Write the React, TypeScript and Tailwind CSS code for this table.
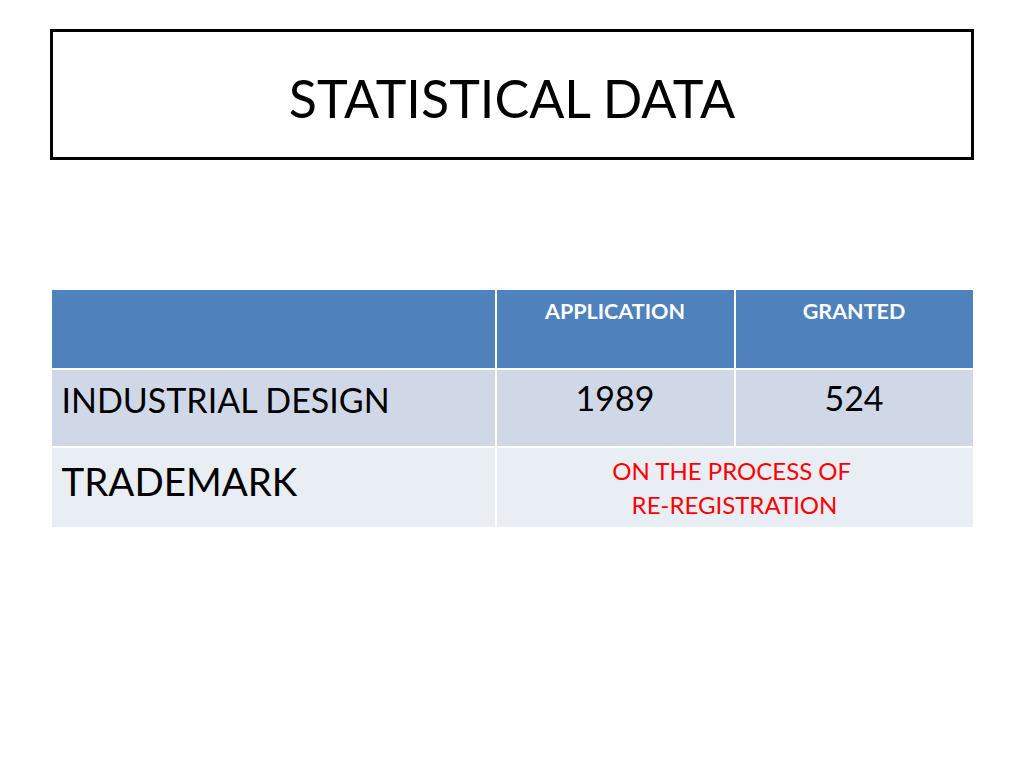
export default function App() {
  return (
    <div
      className="w-[1024px] h-[768px] bg-white flex flex-col items-center"
      style={{ fontFamily: "Lato, 'Open Sans', sans-serif" }}
    >
      <div className="mt-[29px] w-[924px] h-[131px] border-[3px] border-black flex items-center justify-center pt-[6px]">
        <h1 className="text-[52px] leading-none text-black">STATISTICAL DATA</h1>
      </div>

      <div className="mt-[130px] w-[921px] grid grid-cols-[443px_237px_237px] gap-[2px] bg-white">
        <div className="bg-[#4f81bd] h-[78px]" />
        <div className="bg-[#4f81bd] h-[78px] pt-[5px] text-center text-white font-bold text-[21.5px]">APPLICATION</div>
        <div className="bg-[#4f81bd] h-[78px] pt-[5px] text-center text-white font-bold text-[21.5px]">GRANTED</div>

        <div className="bg-[#d0d8e8] h-[76px] pl-[10px] pt-[4px] text-[34px] text-black">INDUSTRIAL DESIGN</div>
        <div className="bg-[#d0d8e8] h-[76px] pt-[2px] text-center text-[34px] text-black">1989</div>
        <div className="bg-[#d0d8e8] h-[76px] pt-[2px] text-center text-[34px] text-black">524</div>

        <div className="bg-[#e9edf4] h-[79px] pl-[10px] pt-[9px] text-[38.5px] leading-tight text-black">TRADEMARK</div>
        <div className="col-span-2 bg-[#e9edf4] h-[79px] pt-[6px] text-center text-[24px] leading-[34px] text-[#ff0000]">
          ON THE PROCESS OF&nbsp;
          <br />
          RE-REGISTRATION
        </div>
      </div>
    </div>
  );
}
